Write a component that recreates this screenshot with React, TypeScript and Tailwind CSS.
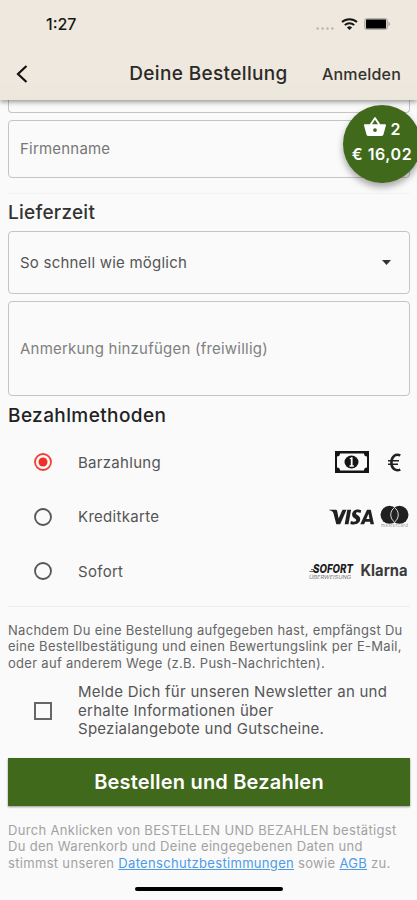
import React, { useState } from 'react';

const PAYMENT_METHODS = [
  { id: 'cash', label: 'Barzahlung', logos: <CashLogos /> },
  { id: 'card', label: 'Kreditkarte', logos: <CardLogos /> },
  { id: 'sofort', label: 'Sofort', logos: <SofortLogos /> },
];

function StatusBar() {
  return (
    <div className="flex h-[48px] items-center justify-between pl-[46px] pr-[26px]">
      <span className="text-[16px] font-medium leading-5 text-[#171713]">1:27</span>
      <div className="flex items-center">
        <svg className="mr-[6px] mt-[8px] h-[3px] w-[20px]" viewBox="0 0 20 3" fill="#bab5ab">
          <circle cx="2.7" cy="1.5" r="1.2" />
          <circle cx="7.6" cy="1.5" r="1.2" />
          <circle cx="12.5" cy="1.5" r="1.2" />
          <circle cx="17.4" cy="1.5" r="1.2" />
        </svg>
        <svg className="mr-[6px] h-[12px] w-[17px]" viewBox="0 0 17 12" fill="none" stroke="#161613" strokeWidth="2">
          <path d="M1 4.1a11 11 0 0 1 15 0" />
          <path d="M3.8 7.1a6.8 6.8 0 0 1 9.4 0" />
          <path d="M8.5 12 5.9 9.4a3.8 3.8 0 0 1 5.2 0z" fill="#161613" stroke="none" />
        </svg>
        <svg className="h-[12px] w-[27px]" viewBox="0 0 27 12">
          <rect x="0.5" y="0.5" width="23" height="11" rx="2" fill="#d5cfc5" stroke="#b5b0a6" />
          <rect x="2" y="1.5" width="20" height="9" rx="0.5" fill="#000" />
          <path d="M24.5 4v4c1-.3 1.6-1 1.6-2s-.6-1.7-1.6-2z" fill="#aaa69d" />
        </svg>
      </div>
    </div>
  );
}

function CashLogos() {
  return (
    <div className="flex items-center">
      <svg className="mr-[19px] h-[22px] w-[34px]" viewBox="0 0 34 22">
        <rect width="34" height="22" fill="#151515" />
        <path d="M5 2.5h24a3 3 0 0 0 3 3v11a3 3 0 0 0-3 3H5a3 3 0 0 0-3-3v-11a3 3 0 0 0 3-3z" fill="#fafafa" />
        <ellipse cx="16.5" cy="11" rx="7" ry="6.5" fill="#151515" />
        <path d="M14.3 7.8 16.200 6.300h1.400v8h1.200v1.400h-4.300v-1.400h1.300V8.200z" fill="#fafafa" />
      </svg>
      <svg className="mr-[9px] h-[19px] w-[13px]" viewBox="0 0 13 19" fill="none" stroke="#222">
        <path d="M12.300 2.400C7.500.4 3.400 3.500 3.400 9.500s4.100 9.100 8.900 7.100" strokeWidth="2.600" />
        <path d="M0 7.800h11M0 11.200h10" strokeWidth="1.600" />
      </svg>
    </div>
  );
}

function CardLogos() {
  return (
    <div className="mr-[1px] flex items-center">
      <svg className="mr-[6px] h-[16px] w-[45px]" viewBox="0 0 45 16" fill="#202020">
        <path d="M0 .8h6.500c1.100 0 1.600.6 1.800 1.600l1.300 7.200L13.500.8h4L11.200 15.300H7.300L4.400 4C3.500 2.200 2 1.500 0 1z" />
        <path d="M18.300.8h3.800l-2.600 14.500h-3.800z" />
        <path d="M32.200 1.200 31.500 4c-2.200-1-4.500-.9-4.500.5 0 1.600 4.200 1.900 4.200 5.600 0 4.900-5.700 6.500-9.900 4.800l.6-3c2.600 1.300 5.300 1 5.300-.6 0-1.700-4.100-2-4.100-5.700 0-4 4.800-6.100 9.100-4.400z" />
        <path d="M38 .8h3.800L45 15.300h-3.500l-.5-2.500h-4.800l-1.100 2.500h-3.800zm1.500 3.900-2.200 5.300h3.200z" fillRule="evenodd" />
      </svg>
      <svg className="h-[24px] w-[29px]" viewBox="0 0 29 24">
        <circle cx="9.5" cy="9.8" r="9" fill="#202020" />
        <circle cx="19.5" cy="9.8" r="9" fill="#202020" />
        <path d="M14.500 2.500a9 9 0 0 1 0 14.600 9 9 0 0 1 0-14.600z" fill="#222" stroke="#ddd" strokeWidth="1" />
        <text x="1" y="22.4" textLength="27" fontFamily="Inter, sans-serif" fontSize="4.5" fill="#999">mastercard</text>
      </svg>
    </div>
  );
}

function SofortLogos() {
  return (
    <div className="mr-[1px] flex items-center">
      <svg className="mr-[2px] h-[24px] w-[50px] overflow-visible" viewBox="0 -3 50 24">
        <path d="M1.500 9.500h5M3 7.500h3" stroke="#666" strokeWidth="1" />
        <text x="5" y="11.3" textLength="40" lengthAdjust="spacingAndGlyphs" fontFamily="Inter, sans-serif" fontSize="11.5" fontStyle="italic" fontWeight="800" fill="#1e1e1e">SOFORT</text>
        <text x="1" y="16.8" textLength="42" lengthAdjust="spacingAndGlyphs" fontFamily="Inter, sans-serif" fontSize="4.5" fontStyle="italic" fill="#777">ÜBERWEISUNG</text>
      </svg>
      <svg className="h-[24px] w-[49px] overflow-visible" viewBox="0 0 49 24" fill="#3a3a3a">
        <text x="0.5" y="16.5" textLength="47" lengthAdjust="spacingAndGlyphs" fontFamily="Inter, sans-serif" fontSize="16" fontWeight="700">Klarna</text>
      </svg>
    </div>
  );
}

function CartBadge() {
  return (
    <button className="absolute left-[343px] top-[105px] z-20 flex h-[78px] w-[78px] flex-col items-center rounded-full bg-[#40691b] pt-[11px] text-white shadow-[0_4px_7px_rgba(0,0,0,0.35)]">
      <span className="flex h-[22px] items-center gap-[5px]">
        <svg className="h-[20px] w-[22px]" viewBox="0 0 23 21" fill="currentColor">
          <path
            fillRule="evenodd"
            d="M17 7.500 12.400.7a1.100 1.100 0 0 0-1.800 0L6 7.500H1a1 1 0 0 0-1 1.300l2.600 9.900A2 2 0 0 0 4.500 20h14a2 2 0 0 0 1.900-1.500L23 8.700a1 1 0 0 0-1-1.200zm-8.600 0 3.100-4.600 3.100 4.600zM11.500 15.700a2 2 0 1 0 0-4 2 2 0 0 0 0 4z"
          />
        </svg>
        <span className="mt-[3px] text-[16px] font-semibold leading-5">2</span>
      </span>
      <span className="mt-[6px] whitespace-nowrap text-[16px] font-semibold leading-5 tracking-[0.55px]">€ 16,02</span>
    </button>
  );
}

export default function App() {
  const [method, setMethod] = useState('cash');
  const [newsletter, setNewsletter] = useState(false);

  return (
    <div className="relative flex h-[900px] w-[417px] flex-col overflow-hidden bg-[#fafafa] font-['Inter',sans-serif] text-[#555]">
      <header className="relative z-10 h-[100px] shrink-0 bg-gradient-to-b from-[#eee8df] from-80% to-[#ebe8da] shadow-[0_2px_5px_rgba(0,0,0,0.4)]">
        <StatusBar />
        <div className="grid h-[52px] grid-cols-[113px_1fr_113px] items-center">
          <button className="pl-[16px]">
            <svg className="h-[18px] w-[12px]" viewBox="0 0 12 18" fill="none" stroke="#111" strokeWidth="2.2">
              <path d="M10.500 1 2 9l8.500 8" />
            </svg>
          </button>
          <h1 className="whitespace-nowrap text-center text-[19px] font-medium leading-6 tracking-[0.35px] text-[#2b2a27]">Deine Bestellung</h1>
          <button className="whitespace-nowrap pr-[16px] text-right text-[16px] font-medium tracking-[0.2px] text-[#34322e]">Anmelden</button>
        </div>
      </header>

      <CartBadge />

      <main className="flex flex-col pl-[8px] pr-[7px]">
        <div className="h-[13px] rounded-b-[4px] border border-t-0 border-[#c4c4c4]" />
        <div className="mt-[7px] flex h-[58px] items-center rounded-[4px] border border-[#c4c4c4] px-[11px] text-[15px] tracking-[0.2px] text-[#777]">
          Firmenname
        </div>
        <div className="mt-[15px] h-px bg-[#f3f3f3]" />

        <h2 className="mt-[7px] h-[24px] text-[19px] font-medium leading-6 tracking-[0.25px] text-[#333]">Lieferzeit</h2>
        <button className="mt-[6px] flex h-[63px] items-center justify-between rounded-[4px] border border-[#c4c4c4] pl-[11px] pr-[18px] text-[15px] tracking-[0.22px] text-[#555]">
          <span className="mt-px">So schnell wie möglich</span>
          <svg className="h-[5px] w-[9px]" viewBox="0 0 9 5" fill="#333">
            <path d="M0 0h9L4.500 5z" />
          </svg>
        </button>
        <div className="mt-[7px] flex h-[95px] items-center rounded-[4px] border border-[#c4c4c4] px-[11px] pt-px text-[15px] tracking-[0.22px] text-[#808080]">
          Anmerkung hinzufügen (freiwillig)
        </div>

        <h2 className="mt-[8px] h-[24px] text-[19px] font-medium leading-6 tracking-[0.4px] text-[#222]">Bezahlmethoden</h2>
        <div className="mt-[7px] flex flex-col">
          {PAYMENT_METHODS.map((m) => (
            <button key={m.id} onClick={() => setMethod(m.id)} className="flex h-[54.500px] items-center pl-[26px]">
              <svg className="h-[18px] w-[18px]" viewBox="0 0 18 18" fill="none" stroke={method === m.id ? '#ef4034' : '#555'} strokeWidth="1.8">
                <circle cx="9" cy="9" r="8" />
                {method === m.id && <circle cx="9" cy="9" r="4.5" fill="#ef3026" stroke="none" />}
              </svg>
              <span className="ml-[26px] mt-px flex-1 text-left text-[15px] tracking-[0.3px]">{m.label}</span>
              {m.logos}
            </button>
          ))}
        </div>
        <div className="mt-[7px] h-px bg-[#eee]" />

        <p className="mt-[15px] whitespace-nowrap text-[13px] leading-[16.500px] tracking-[0.29px] text-[#666]">
          Nachdem Du eine Bestellung aufgegeben hast, empfängst Du
          <br />
          eine Bestellbestätigung und einen Bewertungslink per E-Mail,
          <br />
          oder auf anderem Wege (z.B. Push-Nachrichten).
        </p>

        <label className="mt-[12px] flex items-center pl-[26px]">
          <input type="checkbox" checked={newsletter} onChange={() => setNewsletter(!newsletter)} className="h-[18px] w-[18px] shrink-0 appearance-none border-2 border-[#666] checked:bg-[#40691b]" />
          <span className="ml-[26px] whitespace-nowrap text-[15px] leading-[18.500px] tracking-[0.26px]">
            Melde Dich für unseren Newsletter an und
            <br />
            erhalte Informationen über
            <br />
            Spezialangebote und Gutscheine.
          </span>
        </label>

        <button className="mt-[19px] h-[48px] bg-[#40691b] text-[20px] font-semibold leading-6 tracking-[0.2px] text-white shadow-[0_1px_2px_rgba(0,0,0,0.4)]">
          Bestellen und Bezahlen
        </button>

        <p className="mt-[16px] whitespace-nowrap text-[13px] leading-[16.500px] tracking-[0.32px] text-[#a2a2a2]">
          Durch Anklicken von BESTELLEN UND BEZAHLEN bestätigst
          <br />
          Du den Warenkorb und Deine eingegebenen Daten und
          <br />
          stimmst unseren <a className="text-[#4b9be8] underline">Datenschutzbestimmungen</a> sowie <a className="text-[#4b9be8] underline">AGB</a> zu.
        </p>
      </main>
      <div className="mx-auto mt-[16px] h-[4px] w-[148px] shrink-0 rounded-full bg-black" />
    </div>
  );
}
